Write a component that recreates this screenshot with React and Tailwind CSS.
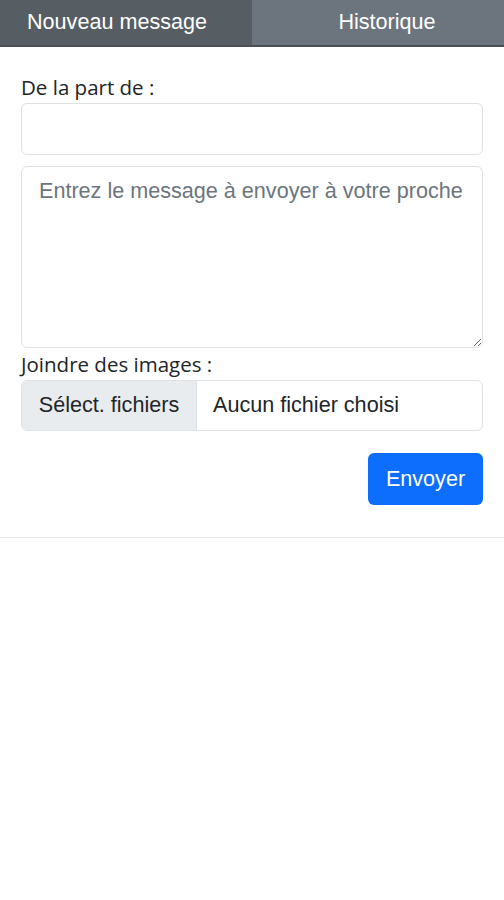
import React, { useState } from "react";

const App = () => {
  const [tab, setTab] = useState("new");

  return (
    <div className="min-h-screen bg-white font-['Liberation_Sans',Arial,sans-serif]">
      {/* Tabs */}
      <div className="flex h-[47px] border-b-2 border-[#4a5055]">
        <button
          onClick={() => setTab("new")}
          className="w-1/2 bg-[#565e64] text-white text-[21.6px] pr-[18px] flex items-center justify-center"
        >
          Nouveau message
        </button>
        <button
          onClick={() => setTab("history")}
          className="w-1/2 bg-[#6c757d] text-white text-[21.6px] pl-[18px] flex items-center justify-center"
        >
          Historique
        </button>
      </div>

      {/* Form */}
      <div className="px-[21px] pt-[28px] pb-[32px] border-b border-[#e4e4e4]">
        <label className="block text-[20.5px] leading-[24px] text-[#212529] font-['Open_Sans',sans-serif] mb-[4px]">
          De la part de :
        </label>
        <input
          type="text"
          className="block w-full h-[52px] rounded-[6px] border border-[#dee2e6] px-4 text-[20px] outline-none"
        />
        <textarea
          placeholder="Entrez le message à envoyer à votre proche"
          className="block w-full h-[182px] mt-[11px] rounded-[6px] border border-[#dee2e6] px-[17px] py-[11px] text-[21.6px] leading-[26px] placeholder:text-[#6c757d] outline-none"
        />
        <label className="block text-[20.5px] leading-[24px] text-[#212529] font-['Open_Sans',sans-serif] mt-[4px] mb-[4px]">
          Joindre des images :
        </label>
        <div className="flex h-[51px] rounded-[6px] border border-[#dee2e6] overflow-hidden text-[21.6px] text-[#212529]">
          <div className="w-[175px] bg-[#e9ecef] border-r border-[#dee2e6] flex items-center justify-center">
            Sélect. fichiers
          </div>
          <div className="flex items-center pl-4">Aucun fichier choisi</div>
        </div>
        <div className="flex justify-end mt-[22px]">
          <button className="h-[52px] w-[115px] rounded-[6px] bg-[#0d6efd] text-white text-[21.6px]">
            Envoyer
          </button>
        </div>
      </div>
    </div>
  );
};

export default App;
